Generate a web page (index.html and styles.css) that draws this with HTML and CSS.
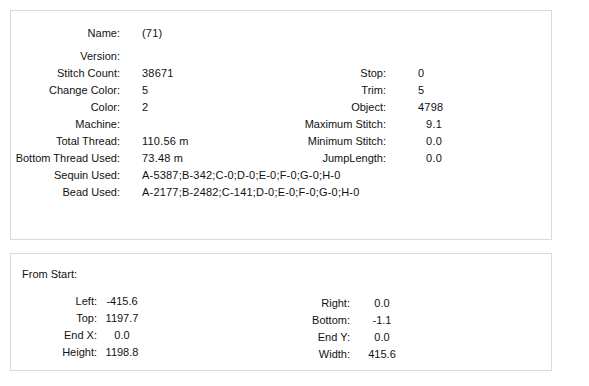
FILE: index.html
```html
<!DOCTYPE html>
<html lang="en">
<head>
    <meta charset="UTF-8">
    <title>Design Info</title>
    <link rel="stylesheet" href="styles.css">
</head>
<body>
    <div class="panel info-panel">
        <div class="info-grid">
            <div class="label name-row">Name:</div>
            <div class="value name-row span-3">(71)</div>

            <div class="label">Version:</div>
            <div class="value span-3"></div>

            <div class="label">Stitch Count:</div>
            <div class="value">38671</div>
            <div class="label">Stop:</div>
            <div class="value right-value">0</div>

            <div class="label">Change Color:</div>
            <div class="value">5</div>
            <div class="label">Trim:</div>
            <div class="value right-value">5</div>

            <div class="label">Color:</div>
            <div class="value">2</div>
            <div class="label">Object:</div>
            <div class="value right-value">4798</div>

            <div class="label">Machine:</div>
            <div class="value"></div>
            <div class="label">Maximum Stitch:</div>
            <div class="value right-value"><span class="num">9.1</span></div>

            <div class="label">Total Thread:</div>
            <div class="value">110.56 m</div>
            <div class="label">Minimum Stitch:</div>
            <div class="value right-value"><span class="num">0.0</span></div>

            <div class="label">Bottom Thread Used:</div>
            <div class="value">73.48 m</div>
            <div class="label">JumpLength:</div>
            <div class="value right-value"><span class="num">0.0</span></div>

            <div class="label">Sequin Used:</div>
            <div class="value span-3">A-5387;B-342;C-0;D-0;E-0;F-0;G-0;H-0</div>

            <div class="label">Bead Used:</div>
            <div class="value span-3">A-2177;B-2482;C-141;D-0;E-0;F-0;G-0;H-0</div>
        </div>
    </div>

    <div class="panel start-panel">
        <div class="start-title">From Start:</div>
        <div class="start-columns">
            <div class="coord-grid coord-left">
                <div class="label">Left:</div><div class="coord">-415.6</div>
                <div class="label">Top:</div><div class="coord">1197.7</div>
                <div class="label">End X:</div><div class="coord">0.0</div>
                <div class="label">Height:</div><div class="coord">1198.8</div>
            </div>
            <div class="coord-grid coord-right">
                <div class="label">Right:</div><div class="coord">0.0</div>
                <div class="label">Bottom:</div><div class="coord">-1.1</div>
                <div class="label">End Y:</div><div class="coord">0.0</div>
                <div class="label">Width:</div><div class="coord">415.6</div>
            </div>
        </div>
    </div>
</body>
</html>
```

FILE: styles.css
```css
* {
    margin: 0;
    padding: 0;
    box-sizing: border-box;
}

body {
    background: #fff;
    color: #111;
    font-family: "Liberation Sans", Arial, sans-serif;
    font-size: 11px;
    padding: 10px;
}

.panel {
    width: 542px;
    border: 1px solid #dadada;
    background: #fff;
}

.info-panel {
    height: 230px;
    padding-top: 19px;
}

.info-grid {
    display: grid;
    grid-template-columns: 109px 150px 116px auto;
    grid-auto-rows: 17px;
    align-items: center;
}

.info-grid .name-row {
    height: 23px;
    padding-bottom: 6px;
}

.info-grid .label {
    text-align: right;
    white-space: nowrap;
}

.info-grid .value {
    padding-left: 22px;
    white-space: nowrap;
    letter-spacing: 0.2px;
}

.info-grid .right-value {
    padding-left: 32px;
}

.span-3 {
    grid-column: span 3;
}

.num {
    display: inline-block;
    width: 24px;
    text-align: right;
}

.start-panel {
    margin-top: 13px;
    height: 118px;
    padding: 12px 0 0 11px;
}

.start-title {
    line-height: 17px;
}

.start-columns {
    display: flex;
    margin-top: 9px;
}

.coord-grid {
    display: grid;
    grid-auto-rows: 17px;
    align-items: center;
}

.coord-grid .label {
    text-align: right;
}

.coord-grid .coord {
    text-align: center;
}

.coord-left {
    grid-template-columns: 75px 50px;
}

.coord-right {
    grid-template-columns: 203px 64px;
    margin-top: 2px;
}
```
